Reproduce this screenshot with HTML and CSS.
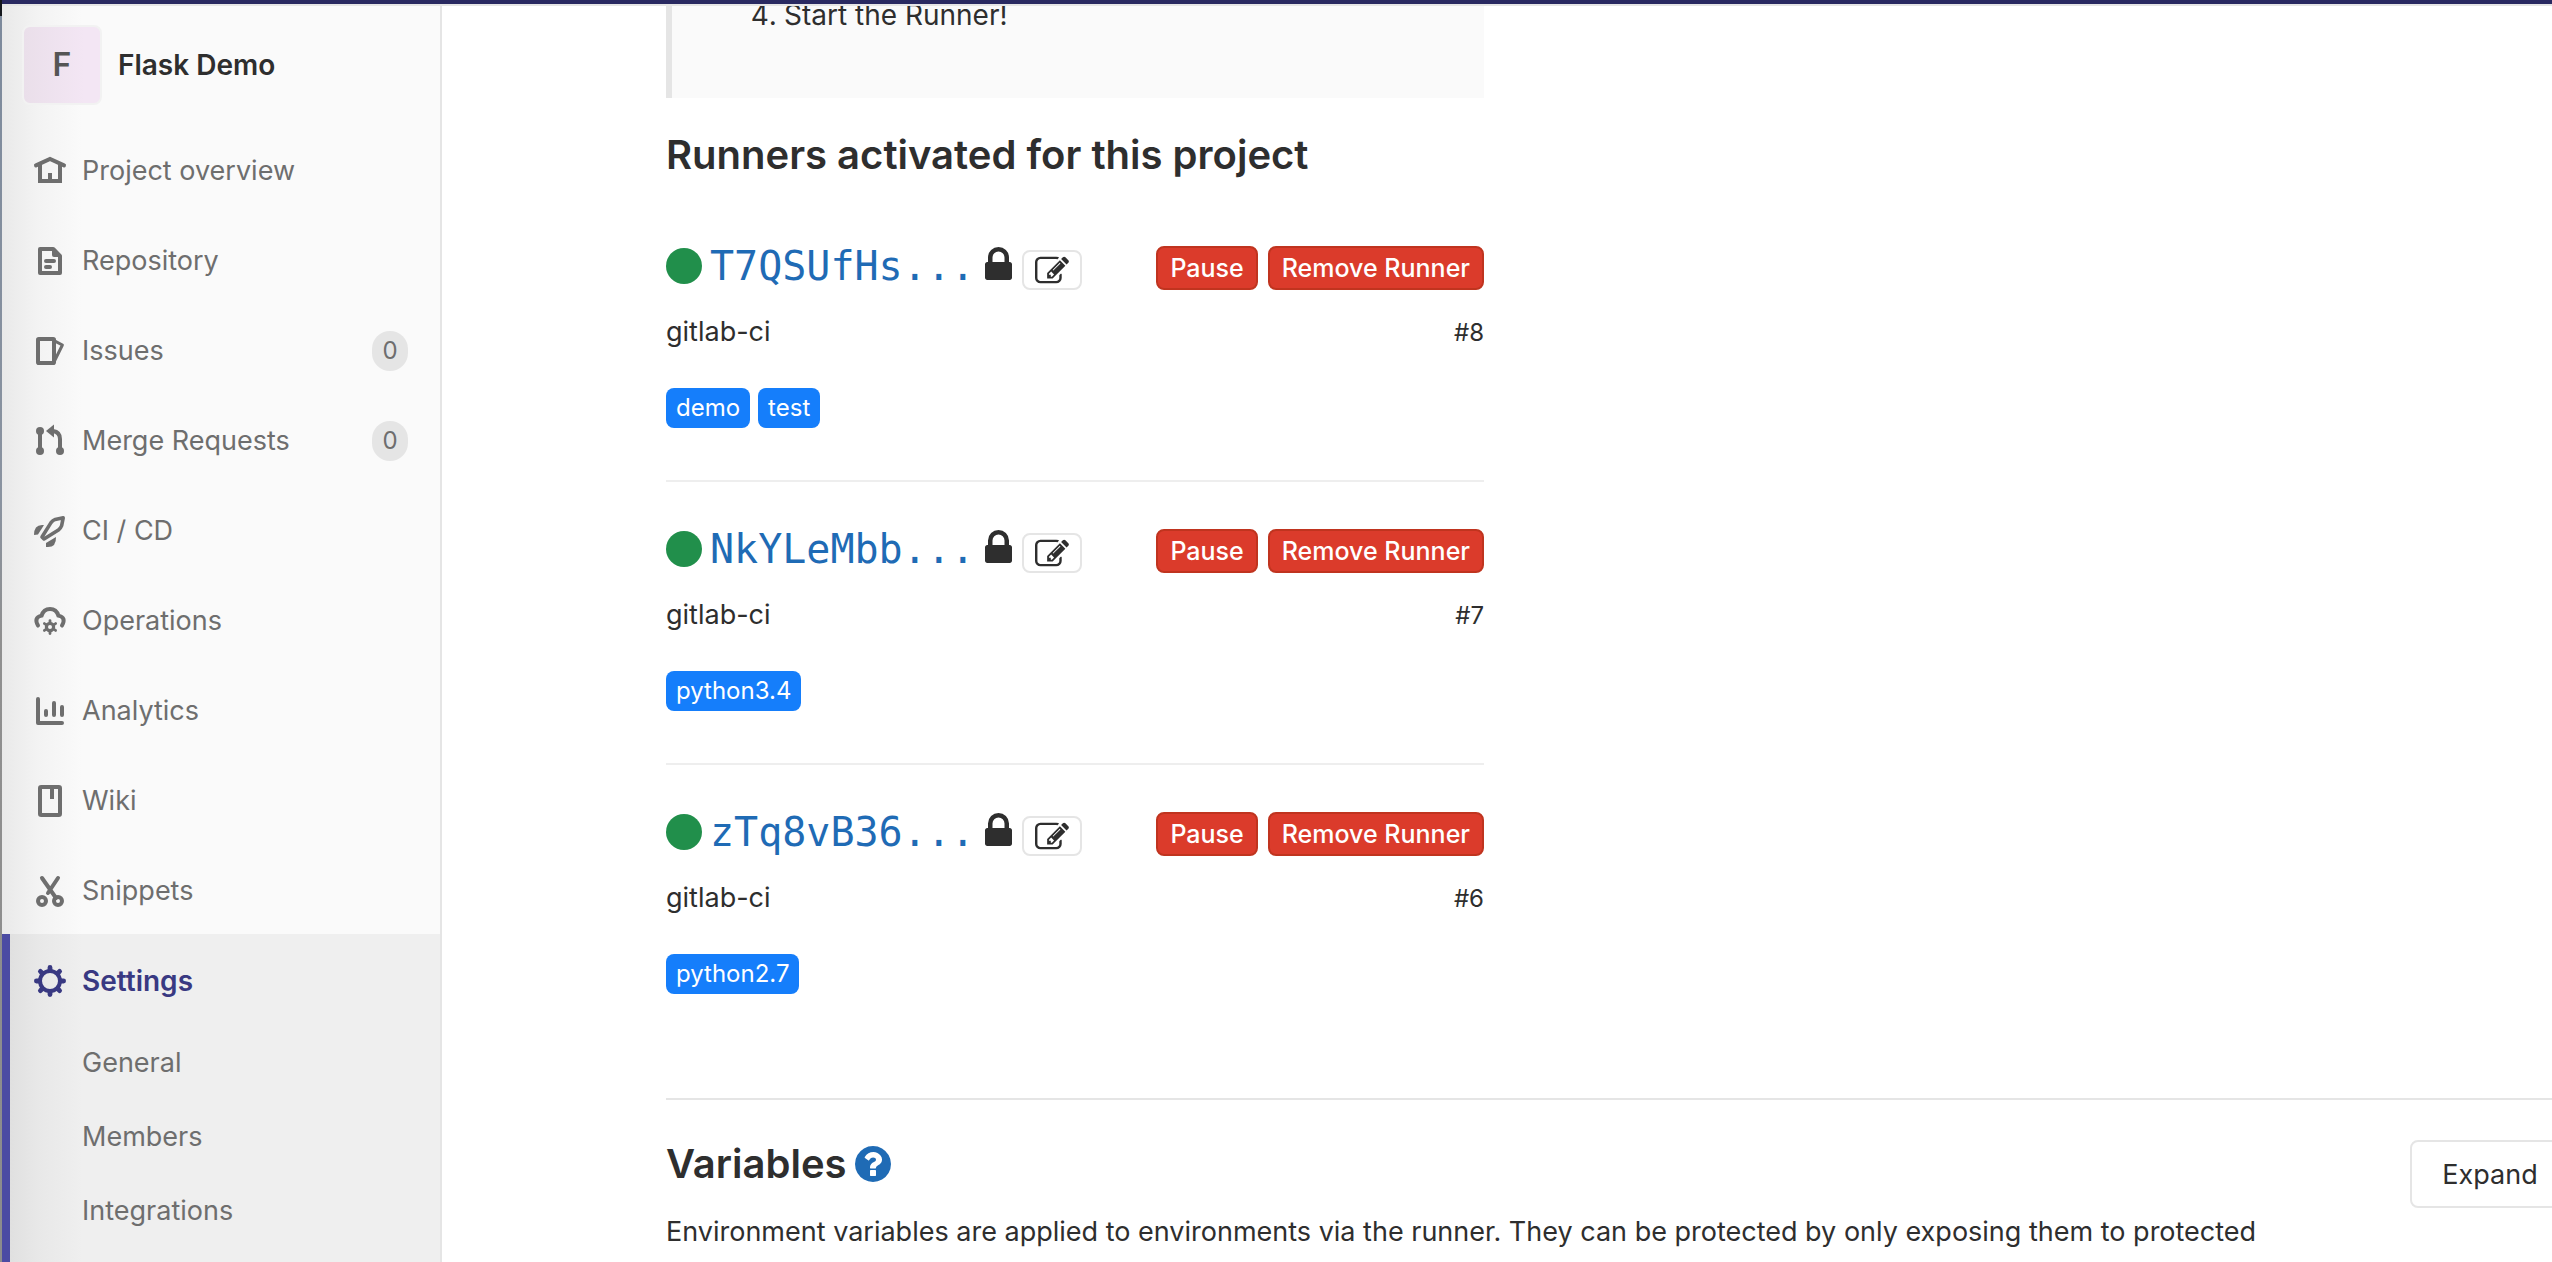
FILE: index.html
```html
<!DOCTYPE html>
<html lang="en">
<head>
    <meta charset="UTF-8">
    <meta name="viewport" content="width=device-width, initial-scale=1.0">
    <title>CI / CD Settings · Flask Demo</title>
    <link rel="stylesheet" href="styles.css">
</head>
<body>
    <!-- shared icons -->
    <svg class="sprite" aria-hidden="true">
        <symbol id="lock" viewBox="0 128 1152 1408">
            <path d="M320 768h512v-192q0-106-75-181t-181-75-181 75-75 181v192zm832 96v576q0 40-28 68t-68 28h-960q-40 0-68-28t-28-68v-576q0-40 28-68t68-28h32v-192q0-184 132-316t316-132 316 132 132 316v192h32q40 0 68 28t28 68z"/>
        </symbol>
        <symbol id="edit" viewBox="0 -64 1792 1792">
            <path d="M888 1184l116-116-152-152-116 116v56h96v96h56zm440-720q-16-16-33 1l-350 350q-17 17-1 33t33-1l350-350q17-17 1-33zm80 594v190q0 119-84.5 203.5t-203.5 84.5h-832q-119 0-203.5-84.5t-84.5-203.5v-832q0-119 84.5-203.5t203.5-84.5h832q63 0 117 25 15 7 18 23 3 17-9 29l-49 49q-14 14-32 8-23-6-45-6h-832q-66 0-113 47t-47 113v832q0 66 47 113t113 47h832q66 0 113-47t47-113v-126q0-13 9-22l64-64q15-15 35-7t20 29zm-96-738l288 288-672 672h-288v-288zm444 132l-92 92-288-288 92-92q28-28 68-28t68 28l152 152q28 28 28 68t-28 68z"/>
        </symbol>
    </svg>

    <div class="window_edge"></div>
    <div class="page">
        <header class="navbar"></header>
        <div class="layout">
            <nav class="sidebar">
                <a class="project" href="#">
                    <span class="avatar">F</span>
                    <span class="project_name">Flask Demo</span>
                </a>
                <ul class="menu">
                    <li><a class="item" href="#">
                        <svg class="icon line" viewBox="0 0 16 16"><path stroke-linecap="round" d="M1 5.2L8 2l7 3.2"/><path d="M3 5v8h10V5"/><path d="M8 14V9"/></svg>
                        Project overview</a></li>
                    <li><a class="item" href="#">
                        <svg class="icon line" viewBox="0 0 16 16"><path stroke-linejoin="round" d="M3 2h6.6L13 5.4V14H3z"/><path class="solid" d="M9 2h1l4 4v0H10a1 1 0 0 1-1-1z"/><path stroke-linecap="round" d="M6 8h4M6 11h2"/></svg>
                        Repository</a></li>
                    <li><a class="item" href="#">
                        <svg class="icon line" viewBox="0 0 16 16"><rect x="2" y="2" width="8" height="12" rx=".4"/><path stroke-width="1.5" stroke-linejoin="round" d="M10 2.8l4.2 2.2L10 13.5"/></svg>
                        Issues <span class="badge">0</span></a></li>
                    <li><a class="item" href="#">
                        <svg class="icon line" viewBox="0 0 16 16"><path d="M3 3v10M8 3h1.5Q13 3.5 13 7v6"/><g class="solid"><circle cx="3" cy="3" r="2"/><circle cx="3" cy="13" r="2"/><circle cx="13" cy="13" r="2"/><path d="M6 3l4-3.2v6.4z"/></g></svg>
                        Merge Requests <span class="badge">0</span></a></li>
                    <li><a class="item" href="#">
                        <svg class="icon line" viewBox="0 0 16 16"><path stroke-width="1.8" stroke-linejoin="round" d="M14.6 1.4l-4 .8Q9.4 2.6 8.5 3.8L4 11l1 1 7.2-4.5q1.2-.9 1.6-2.1z"/><g class="solid"><path d="M0 10q0-5 4-5h1l-3 4.8z"/><path d="M6 16v-2l5-3q.2 5-4 5z"/></g></svg>
                        CI / CD</a></li>
                    <li><a class="item" href="#">
                        <svg class="icon line" viewBox="0 0 16 16"><path stroke-linecap="round" d="M2 10.3Q-.3 6.2 3.8 5.3 4.8 2 8 2t4.2 3.3q4.1.9 1.8 5"/><circle cx="8" cy="11" r="1.8" stroke-width="1.6"/><path stroke-width="1.4" stroke-linecap="round" d="M8 8.4v-.6M8 13.6v.7M5.8 9.7l-.6-.4M10.2 9.7l.6-.4M5.8 12.3l-.6.4M10.2 12.3l.6.4"/></svg>
                        Operations</a></li>
                    <li><a class="item" href="#">
                        <svg class="icon line" viewBox="0 0 16 16"><path stroke-linecap="round" stroke-linejoin="round" d="M2 2v12h12M6 8v2M10 4v6M14 6v4"/></svg>
                        Analytics</a></li>
                    <li><a class="item" href="#">
                        <svg class="icon line" viewBox="0 0 16 16"><rect x="3" y="1" width="10" height="14" rx=".6"/><path d="M9 1v6"/></svg>
                        Wiki</a></li>
                    <li><a class="item" href="#">
                        <svg class="icon line" viewBox="0 0 16 16"><circle cx="4" cy="13" r="2"/><circle cx="12" cy="13" r="2"/><path stroke-linecap="round" d="M4 1.5l7 10M12 1.5L7 9"/></svg>
                        Snippets</a></li>
                    <li class="active">
                        <a class="item" href="#">
                            <svg class="icon line" viewBox="0 0 16 16"><circle cx="8" cy="8" r="5"/><path stroke-width="2.4" stroke-linecap="round" d="M8 2.3V1.2M8 13.7v1.1M2.3 8H1.2M13.7 8h1.1M4 4l-.8-.8M12 12l.8.8M4 12l-.8.8M12 4l.8-.8"/></svg>
                            Settings</a>
                        <ul class="submenu">
                            <li><a href="#">General</a></li>
                            <li><a href="#">Members</a></li>
                            <li><a href="#">Integrations</a></li>
                        </ul>
                    </li>
                </ul>
            </nav>

            <main class="content">
                <div class="runners">
                    <div class="callout">
                        <ol start="4">
                            <li>Start the Runner!</li>
                        </ol>
                    </div>
                    <h4>Runners activated for this project</h4>
                    <ul class="runner_list">
                        <li class="runner">
                            <div class="runner_head">
                                <span class="status"></span>
                                <a class="token" href="#">T7QSUfHs...</a>
                                <svg class="lock"><use href="#lock"/></svg>
                                <a class="edit" href="#" aria-label="Edit"><svg><use href="#edit"/></svg></a>
                                <div class="actions">
                                    <button class="danger">Pause</button>
                                    <button class="danger">Remove Runner</button>
                                </div>
                            </div>
                            <div class="runner_info">gitlab-ci <small>#8</small></div>
                            <div class="tags"><span class="tag">demo</span><span class="tag">test</span></div>
                        </li>
                        <li class="runner">
                            <div class="runner_head">
                                <span class="status"></span>
                                <a class="token" href="#">NkYLeMbb...</a>
                                <svg class="lock"><use href="#lock"/></svg>
                                <a class="edit" href="#" aria-label="Edit"><svg><use href="#edit"/></svg></a>
                                <div class="actions">
                                    <button class="danger">Pause</button>
                                    <button class="danger">Remove Runner</button>
                                </div>
                            </div>
                            <div class="runner_info">gitlab-ci <small>#7</small></div>
                            <div class="tags"><span class="tag">python3.4</span></div>
                        </li>
                        <li class="runner">
                            <div class="runner_head">
                                <span class="status"></span>
                                <a class="token" href="#">zTq8vB36...</a>
                                <svg class="lock"><use href="#lock"/></svg>
                                <a class="edit" href="#" aria-label="Edit"><svg><use href="#edit"/></svg></a>
                                <div class="actions">
                                    <button class="danger">Pause</button>
                                    <button class="danger">Remove Runner</button>
                                </div>
                            </div>
                            <div class="runner_info">gitlab-ci <small>#6</small></div>
                            <div class="tags"><span class="tag">python2.7</span></div>
                        </li>
                    </ul>
                </div>

                <section class="variables">
                    <div class="variables_text">
                        <h4>Variables
                            <a class="help" href="#" aria-label="Help"><svg viewBox="128 128 1536 1536"><path d="M1024 1376v-192q0-14-9-23t-23-9h-192q-14 0-23 9t-9 23v192q0 14 9 23t23 9h192q14 0 23-9t9-23zm256-672q0-88-55.5-163t-138.5-116-170-41q-243 0-371 213-15 24 8 42l132 100q7 6 19 6 16 0 25-12 53-68 86-92 34-24 86-24 48 0 85.5 26t37.5 59q0 38-20 61t-68 45q-63 28-115.5 86.5t-52.5 125.5v36q0 14 9 23t23 9h192q14 0 23-9t9-23q0-19 21.5-49.5t54.5-49.5q32-18 49-28.5t46-35 44.5-48 28-60.5 12.5-81zm384 192q0 209-103 385.5t-279.5 279.5-385.5 103-385.5-103-279.5-279.5-103-385.5 103-385.5 279.5-279.5 385.5-103 385.5 103 279.5 279.5 103 385.5z"/></svg></a>
                        </h4>
                        <p>Environment variables are applied to environments via the runner. They can be protected by only exposing them to protected</p>
                    </div>
                    <button class="expand">Expand</button>
                </section>
            </main>
        </div>
    </div>
</body>
</html>
```

FILE: styles.css
```css
* {margin: 0; padding: 0; box-sizing: border-box;}

body
{
    display: flex;
    height: 100vh;
    overflow: hidden;
    background: #fff;
    color: #2e2e2e;
    font-family: Inter, "Liberation Sans", sans-serif;
    font-size: 27px;
    line-height: 40px;
}

ul {list-style: none;}
a {color: inherit; text-decoration: none;}
button {font-family: inherit; cursor: pointer;}
.sprite {position: absolute; width: 0; height: 0;}

.window_edge
{
    flex: none;
    width: 2px;
    background: linear-gradient(#14171c 16px, #7d8a9c 16px, #8a93a0 500px, #8f8f8f 640px, #8c8c8c);
}

.page
{
    flex: 1;
    min-width: 0;
    display: flex;
    flex-direction: column;
}

.navbar
{
    flex: none;
    height: 6px;
    background: #292961;
    border-bottom: 2px solid #e5e5e5;
}

.layout
{
    flex: 1;
    min-height: 0;
    display: flex;
}

/* sidebar */
.sidebar
{
    flex: none;
    width: 440px;
    overflow: hidden;
    color: #6e6e6e;
    background: linear-gradient(to right, #e9e9e9, #f3f3f3 36px, #fafafa 80px);
    border-right: 2px solid #e5e5e5;
}

.project
{
    display: flex;
    align-items: center;
    gap: 16px;
    height: 118px;
    padding: 0 20px;
}

.avatar
{
    width: 80px;
    height: 80px;
    border: 2px solid #f2f2f2;
    border-radius: 8px;
    background: linear-gradient(to right, #eadfea, #f3e6f4 60px);
    color: #555;
    font-size: 32px;
    font-weight: 600;
    line-height: 76px;
    text-align: center;
}

.project_name
{
    color: #2e2e2e;
    font-size: 28px;
    font-weight: 600;
}

.item
{
    display: flex;
    align-items: center;
    gap: 16px;
    height: 90px;
    padding: 3px 32px 0;
}

.icon
{
    flex: none;
    width: 32px;
    height: 32px;
    overflow: visible;
}

.line
{
    fill: none;
    stroke: currentColor;
    stroke-width: 2;
}

.solid
{
    fill: currentColor;
    stroke: none;
}

.badge
{
    margin-left: auto;
    width: 36px;
    border-radius: 18px;
    background: #e5e5e5;
    font-size: 24px;
    text-align: center;
}

.active
{
    height: 400px;
    background: rgba(0, 0, 0, 0.045);
    border-left: 8px solid #4b4ba3;
}

.active .item
{
    padding-left: 24px;
    color: #393982;
    font-size: 28px;
    font-weight: 600;
}

.submenu {padding-top: 2px;}

.submenu a
{
    display: block;
    padding-left: 72px;
    line-height: 74px;
}

/* content */
.content
{
    flex: 1;
    min-width: 0;
    overflow: hidden;
    padding-left: 224px;
}

.runners {max-width: 818px;}

.callout
{
    height: 92px;
    overflow: hidden;
    padding-left: 112px;
    background: #fafafa;
    border-left: 6px solid #e5e5e5;
}

/* list is scrolled under the navbar */
.callout ol
{
    margin-top: -11px;
    font-size: 28px;
}

h4
{
    display: flex;
    align-items: center;
    gap: 8px;
    font-size: 40px;
    font-weight: 600;
    line-height: 48px;
}

.runners h4 {margin: 33px 0 20px;}

.runner
{
    padding: 43px 0 52px;
    border-bottom: 2px solid #eee;
}

.runner:last-child {border-bottom: 0;}

.runner_head
{
    display: flex;
    align-items: baseline;
}

.status
{
    align-self: center;
    width: 36px;
    height: 36px;
    margin-right: 8px;
    border-radius: 50%;
    background: #218f4b;
}

.token
{
    color: #1f6bb5;
    font-family: "DejaVu Sans Mono", monospace;
    font-size: 40px;
    line-height: 48px;
}

.lock
{
    width: 27px;
    height: 33px;
    margin: 0 10px;
    fill: #2e2e2e;
}

.edit
{
    align-self: flex-end;
    display: flex;
    align-items: center;
    justify-content: center;
    width: 60px;
    height: 40px;
    border: 2px solid #e5e5e5;
    border-radius: 8px;
}

.edit svg
{
    width: 34px;
    height: 34px;
    fill: #2e2e2e;
}

.actions
{
    align-self: flex-end;
    display: flex;
    gap: 10px;
    margin-left: auto;
}

.danger
{
    height: 44px;
    padding: 0 12px;
    border: 2px solid #c0341f;
    border-radius: 8px;
    background: #db3b2b;
    color: #fff;
    font-size: 25px;
    font-weight: 500;
}

.runner_info
{
    display: flex;
    align-items: baseline;
    justify-content: space-between;
    margin: 22px 0 35px;
}

.runner_info small {font-size: 24px;}

.tags
{
    display: flex;
    gap: 8px;
}

.tag
{
    padding: 0 10px;
    border-radius: 8px;
    background: #157efb;
    color: #fff;
    font-size: 24px;
}

/* runs past the right edge of the window */
.variables
{
    display: flex;
    justify-content: space-between;
    align-items: flex-start;
    margin: 52px -18px 0 0;
    padding-top: 40px;
    border-top: 2px solid #e5e5e5;
}

.variables p {margin-top: 24px;}

.help
{
    display: flex;
    color: #1f6bb5;
}

.help svg
{
    width: 36px;
    height: 36px;
    fill: currentColor;
}

.expand
{
    flex: none;
    width: 160px;
    height: 68px;
    border: 2px solid #e5e5e5;
    border-radius: 8px;
    background: #fff;
    color: #2e2e2e;
    font-size: 27px;
}
```
